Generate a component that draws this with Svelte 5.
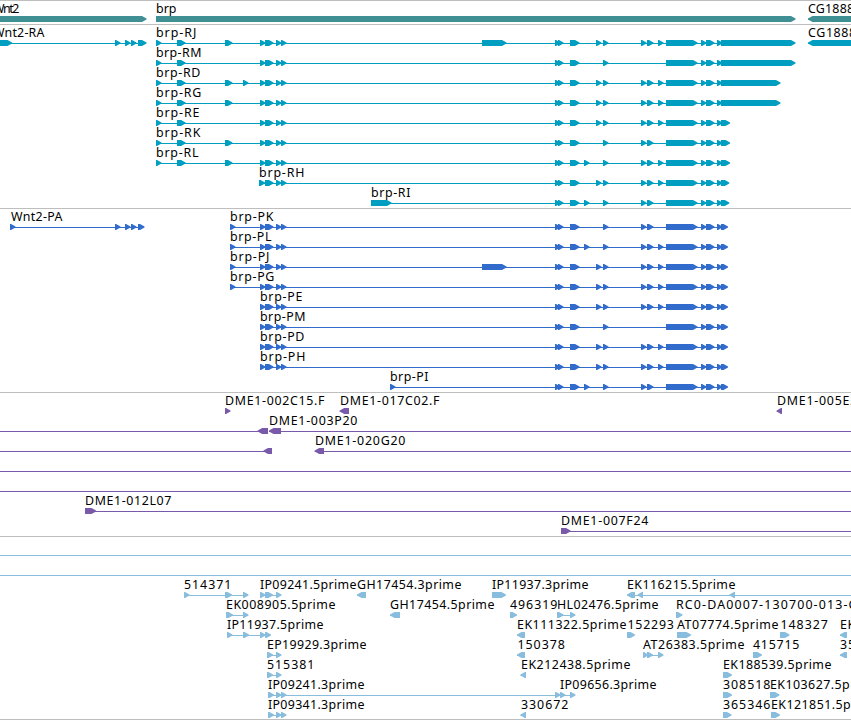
<script>
  const WIDTH = 851;
  const ROW = 20;
  const HEAD = 5.5;

  // Exon lists: [start, end]; label lists: [text, x, width]
  const lead = [[260, 265.5], [265, 273.5], [276, 281.5], [281, 286.5]];
  const pair = [[555, 560.5], [558, 563.5], [570, 579.5]];
  const e584 = [584, 589.5];
  const e596 = [596, 601.5];
  const e603 = [603, 608.5];
  const e641 = [641, 646.5];
  const e647 = [647, 653.5];
  const e658 = [658, 663.5];
  const full = [e596, e603, e641, e647, e658];
  const tail = (end) => [[666, 697.5], [701, 706.5], [706, 714.5], [717, 722.5], [721, end]];
  const first = [[156, 161.5], [177, 185.6]];
  const e225 = [225, 232.5];

  const item = (row, label, x, width, blocks, opts = {}) => ({
    row, label, x, width, blocks, dir: 1,
    from: blocks.length ? blocks[0][0] : 0,
    to: blocks.length ? blocks[blocks.length - 1][1] - 3 : WIDTH,
    ...opts
  });
  const model = (row, label, width, head, middle, end, x) =>
    item(row, label, x ?? head[0][0], width, [...head, ...pair, ...middle, ...tail(end)]);

  const left = { dir: -1 };

  const tracks = [
    {
      name: 'genes', color: '#3f8f94', height: 23,
      items: [
        item(0, 'Wnt2', -7, 27, [[-20, 146.5]]),
        item(0, 'brp', 156, 21, [[156, 795.5]]),
        item(0, 'CG18889', 808, 54, [[808, 880]], left)
      ]
    },
    {
      name: 'transcripts', color: '#009fc2', height: 183,
      items: [
        item(0, 'Wnt2-RA', -7, 52, [[-20, 12], [115, 120.5], [125, 130.5], [131, 136.5], [138, 146.5]]),
        item(0, 'CG18889-RA', 808, 78, [[808, 880]], left),
        model(0, 'brp-RJ', 41, [...first, e225, ...lead, [482, 506.5]], full, 795.5),
        model(1, 'brp-RM', 46, [...first, ...lead], [e603], 795.5),
        model(2, 'brp-RD', 45, [...first, e225, [243, 248.5], ...lead], full, 780.5),
        model(3, 'brp-RG', 46, [...first, e225, ...lead], full, 780.5),
        model(4, 'brp-RE', 44, [...first, ...lead], full, 730),
        model(5, 'brp-RK', 45, [...first, e225, ...lead], [e603, e641, e647], 730),
        model(6, 'brp-RL', 43, [...first, e225, ...lead], [e584, e603, e641, e647, e658], 730),
        model(7, 'brp-RH', 46, [[259, 265], ...lead.slice(1)], full, 729.3),
        model(8, 'brp-RI', 40, [[371, 391.5]], [e584, e603, e641, e647], 729.3)
      ]
    },
    {
      name: 'proteins', color: '#316ccd', height: 183,
      items: [
        item(0, 'Wnt2-PA', 11, 52, [[10, 15.5], [115, 120.5], [125, 130.5], [131, 136.5], [138, 144.5]]),
        model(0, 'brp-PK', 44, [[230, 235.5], ...lead], [e603, e641, e647], 728),
        model(1, 'brp-PL', 42, [[230, 235.5], ...lead], [e584, e603, e641, e647, e658], 728),
        model(2, 'brp-PJ', 40, [[230, 235.5], ...lead, [482, 506.5]], full, 728),
        model(3, 'brp-PG', 45, [[230, 235.5], ...lead], full, 728),
        model(4, 'brp-PE', 43, lead, full, 728),
        model(5, 'brp-PM', 46, lead, [e603], 728),
        model(6, 'brp-PD', 45, lead, full, 728),
        model(7, 'brp-PH', 46, lead, full, 728),
        model(8, 'brp-PI', 39, [[390, 395.5]], [e584, e603, e641, e647], 728)
      ]
    },
    {
      name: 'clones', color: '#795aaa', height: 143,
      items: [
        item(0, 'DME1-002C15.F', 225, 100, [[225, 230.5]]),
        item(0, 'DME1-017C02.F', 340, 100, [[339.7, 349]], left),
        item(0, 'DME1-005E21.F', 777, 100, [[776.7, 782]], left),
        item(1, '', 0, 0, [[257.7, 268]], { dir: -1, from: 0 }),
        item(1, 'DME1-003P20', 269, 89, [[269, 281]], { dir: -1, to: WIDTH }),
        item(2, '', 0, 0, [[263.5, 272]], { dir: -1, from: 0 }),
        item(2, 'DME1-020G20', 315, 91, [[314.7, 324]], { dir: -1, to: WIDTH }),
        item(3, '', 0, 0, []),
        item(4, '', 0, 0, []),
        item(5, 'DME1-012L07', 85, 87, [[85, 96]], { to: WIDTH }),
        item(6, 'DME1-007F24', 561, 88, [[561, 570.5]], { to: WIDTH })
      ]
    },
    {
      name: 'ests', color: '#89bddd', height: 182,
      items: [
        item(0, '', 0, 0, []),
        item(1, '', 0, 0, []),
        item(2, '514371', 184, 48, [[184, 189.5], [225, 232], [243, 248.5]]),
        item(2, 'IP09241.5prime', 260, 97, [[260, 265.5], [265, 273], [276, 281.5]]),
        item(2, 'GH17454.3prime', 357, 105, [[357, 366]], left),
        item(2, 'IP11937.3prime', 492, 97, [[492, 506]]),
        item(2, 'EK116215.5prime', 627, 109, [[627, 635], [637.5, 643], [729.5, 735]], { dir: -1, to: WIDTH }),
        item(3, 'EK008905.5prime', 226, 110, [[226, 233], [243, 248.5]]),
        item(3, 'GH17454.5prime', 390, 105, [[390, 400]], left),
        item(3, '496319', 510, 48, [[510, 517]]),
        item(3, 'HL02476.5prime', 557, 102, [[557, 563.5], [570, 575.5]]),
        item(3, 'RC0-DA0007-130700-013-C', 676, 181, [[676, 682.5]]),
        item(4, 'IP11937.5prime', 227, 97, [[227, 232.5], [243, 249], [260, 265.5], [265, 271]]),
        item(4, 'EK111322.5prime', 517, 110, [[517, 525]], left),
        item(4, '152293', 627.5, 47, [[627, 635]]),
        item(4, 'AT07774.5prime', 677, 102, [[677, 691]]),
        item(4, '148327', 780.5, 48, [[780, 789.5]]),
        item(4, 'EK087361', 840, 62, [[840, 847]], left),
        item(5, 'EP19929.3prime', 267, 100, [[267, 273], [276, 281.5]]),
        item(5, '150378', 517.5, 48, [[517, 525]], left),
        item(5, 'AT26383.5prime', 643, 102, [[643, 648], [647, 653], [658, 663.5]]),
        item(5, '415715', 753, 47, [[753, 762]]),
        item(5, '351862', 840, 48, [[840, 847]], left),
        item(6, '515381', 267, 48, [[267, 273], [276, 281.5]]),
        item(6, 'EK212438.5prime', 521, 110, [[520.5, 526]], left),
        item(6, 'EK188539.5prime', 723, 109, [[723, 732]]),
        item(7, 'IP09241.3prime', 268, 97, [[268, 274], [276, 281.5], [281, 286.5], [555, 560.5], [560, 565.5], [570, 575.5]]),
        item(7, 'IP09656.3prime', 560, 97, [], { from: 560, to: 560 }),
        item(7, '308518', 723, 48, [[723, 732]]),
        item(7, 'EK103627.5prime', 770, 109, [[770, 779.5]]),
        item(8, 'IP09341.3prime', 268, 97, [[268, 274], [276, 281.5], [281, 286.5]]),
        item(8, '330672', 521, 48, [[520.5, 526]], left),
        item(8, '365346', 723, 48, [[723, 731.5]]),
        item(8, 'EK121851.5prime', 771, 109, [[771, 780]])
      ]
    }
  ];

  // Arrow heads keep one full-height column and end in a one-pixel tip.
  function shape([a, b], dir, y) {
    const h = Math.min(HEAD, b - a) - 1;
    const [back, tip] = dir > 0 ? [a, b] : [b, a];
    const neck = tip - dir * h;
    return `${back},${y} ${neck},${y} ${tip},${y + 2.5} ${tip},${y + 3.5} ${neck},${y + 6} ${back},${y + 6}`;
  }
</script>

<main class="browser">
  {#each tracks as track (track.name)}
    <section class="track">
      <svg class={track.name} width={WIDTH} height={track.height} fill={track.color}>
        {#each track.items as f}
          {@const y = f.row * ROW}
          {#if f.to > f.from}
            <rect x={f.from} y={y + 18} width={f.to - f.from} height="1" />
          {/if}
          {#each f.blocks as block}
            <polygon points={shape(block, f.dir, y + 15)} />
          {/each}
          {#if f.label}
            <text x={f.x} y={y + 12} textLength={f.width - 0.6}>{f.label}</text>
          {/if}
        {/each}
      </svg>
    </section>
  {/each}
</main>

<style>
  :global(body) {
    margin: 0;
    background: #fff;
  }

  .browser {
    display: flex;
    flex-direction: column;
    width: 851px;
    height: 720px;
    box-sizing: border-box;
    overflow: hidden;
    background: #fff;
    border-bottom: 1px solid #bebebe;
  }

  .track {
    border-top: 1px solid #bebebe;
    flex: none;
  }

  svg {
    display: block;
    overflow: hidden;
  }

  text {
    fill: #000;
    font-family: "Noto Sans", "Open Sans", sans-serif;
    font-size: 12.4px;
  }
</style>
